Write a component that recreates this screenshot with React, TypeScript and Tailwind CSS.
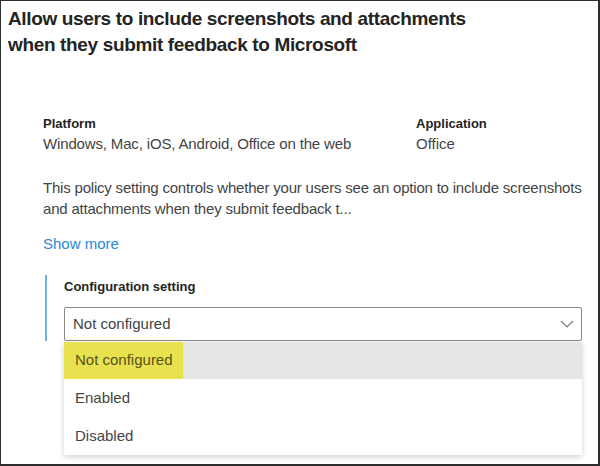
import { useState } from "react";

const options = ["Not configured", "Enabled", "Disabled"];

export default function App() {
  const [value] = useState("Not configured");

  return (
    <div
      className="w-[600px] h-[466px] overflow-hidden bg-white border-l border-t border-r-2 border-b-2 border-[#2e2e2e] text-[#323130]"
      style={{ fontFamily: '"Segoe UI", "Liberation Sans", Arial, sans-serif' }}
    >
      <h1 className="pl-[7px] pt-[5px] text-[19px] leading-[26px] tracking-[-0.35px] font-bold text-[#252423] w-[490px]">
        Allow users to include screenshots and attachments when they submit feedback to Microsoft
      </h1>

      <div className="pl-[42px] pr-[2px]">
        <div className="mt-[57px] flex">
          <div className="w-[373px]">
            <div className="text-[13px] leading-[18px] font-bold text-[#252423]">Platform</div>
            <div className="mt-[1px] text-[15px] leading-[20px] tracking-[-0.15px] text-[#444]">
              Windows, Mac, iOS, Android, Office on the web
            </div>
          </div>
          <div>
            <div className="text-[13px] leading-[18px] font-bold text-[#252423]">Application</div>
            <div className="mt-[1px] text-[15px] leading-[20px] text-[#444]">Office</div>
          </div>
        </div>

        <p className="mt-[23px] text-[15px] leading-[21px] tracking-[-0.2px] text-[#444]">
          This policy setting controls whether your users see an option to include screenshots and
          attachments when they submit feedback t...
        </p>

        <button className="mt-[15px] text-[15px] leading-[20px] text-[#2b88d8]">Show more</button>

        <div className="relative mt-[19px] pr-[6px]">
          <div className="flex">
            <div className="ml-[2px] w-[2px] bg-[#6cb3ee]" />
            <div className="ml-[17px] flex-1 pr-[8px]">
              <div className="pt-[3px] text-[13px] leading-[18px] font-bold text-[#252423]">
                Configuration setting
              </div>
              <div className="mt-[11px] h-[34px] border border-[#8a8886] rounded-[2px] flex items-center justify-between pl-[8px] pr-[7px]">
                <span className="text-[15px] text-[#444]">{value}</span>
                <svg width="14" height="8" viewBox="0 0 14 8" fill="none">
                  <path d="M1 1l6 6 6-6" stroke="#777" strokeWidth="1.1" />
                </svg>
              </div>
            </div>
          </div>

          <div className="absolute left-[21px] right-[14px] top-[67px] bg-white shadow-[0_2px_6px_rgba(0,0,0,0.18)]">
            {options.map((opt) => (
              <div
                key={opt}
                className={
                  opt === value
                    ? "h-[37px] bg-[#e6e6e6] flex items-center"
                    : "h-[38px] flex items-center pl-[11px]"
                }
              >
                {opt === value ? (
                  <span className="h-full w-[119px] bg-[#e9e24f] flex items-center pl-[11px] text-[15px] text-[#55521e]">
                    {opt}
                  </span>
                ) : (
                  <span className="text-[15px] text-[#444]">{opt}</span>
                )}
              </div>
            ))}
          </div>
        </div>
      </div>
    </div>
  );
}
